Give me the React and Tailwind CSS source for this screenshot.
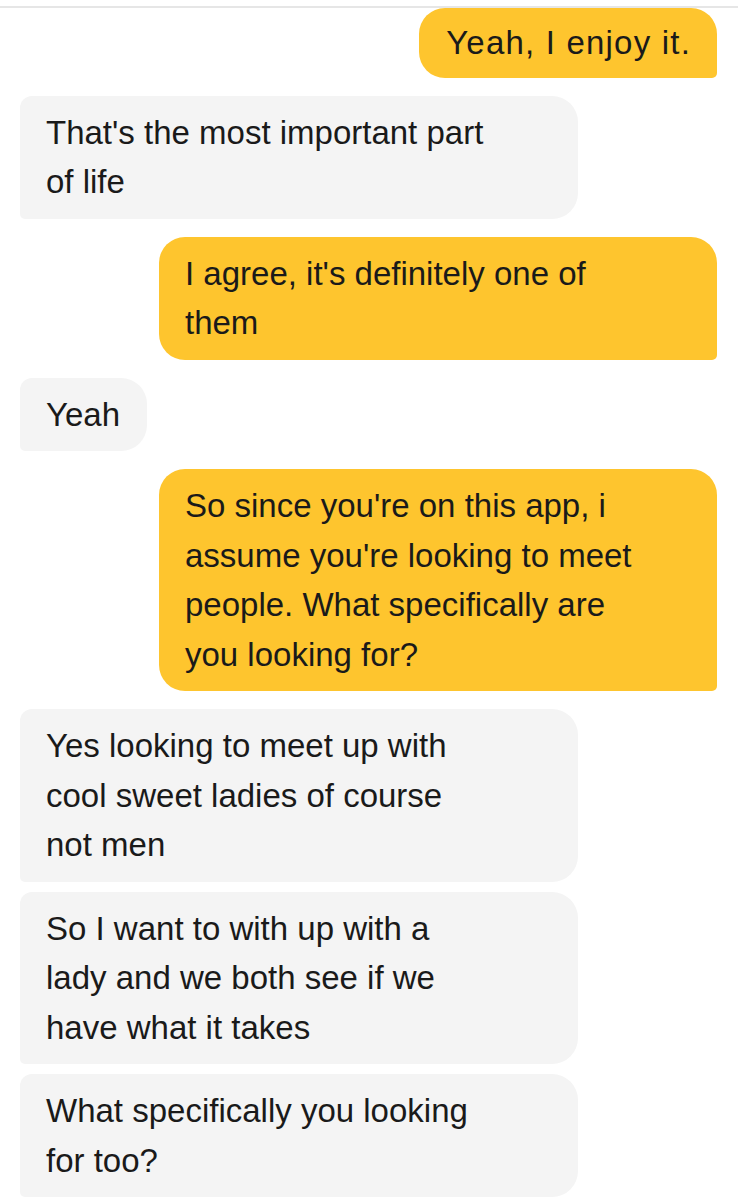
const messages = [
  { me: true, lines: ["Yeah, I enjoy it."], first: true },
  { me: false, lines: ["That's the most important part", "of life"] },
  { me: true, lines: ["I agree, it's definitely one of", "them"] },
  { me: false, lines: ["Yeah"] },
  {
    me: true,
    lines: [
      "So since you're on this app, i",
      "assume you're looking to meet",
      "people. What specifically are",
      "you looking for?",
    ],
  },
  { me: false, lines: ["Yes looking to meet up with", "cool sweet ladies of course", "not men"] },
  { me: false, lines: ["So I want to with up with a", "lady and we both see if we", "have what it takes"], tight: true },
  { me: false, lines: ["What specifically you looking", "for too?"], tight: true },
];

function Bubble({ me, lines, first }) {
  const wide = lines.length > 1;
  return (
    <div
      className={
        (me
          ? "bg-[#fec52e] rounded-l-[26px] rounded-tr-[26px] rounded-br-[5px] self-end mr-[21px]"
          : "bg-[#f4f4f4] rounded-tl-[12px] rounded-bl-[5px] rounded-r-[26px] self-start ml-[20px]") +
        (wide ? " w-[558px]" : "") +
        (first ? " py-[10px] pl-[27px] pr-[26px] tracking-[1.2px]" : " py-3 pl-[26px] pr-[27px]") +
        " text-[33px] leading-[49.5px] text-[#1a1a1a] whitespace-nowrap"
      }
    >
      {lines.map((l, i) => (
        <div key={i}>{l}</div>
      ))}
    </div>
  );
}

export default function App() {
  return (
    <div
      className="w-[738px] h-[1200px] bg-white overflow-hidden"
      style={{ fontFamily: "'Liberation Sans', Arial, sans-serif" }}
    >
      <div className="h-[8px] border-b-2 border-[#e6e6e6]" />
      <div className="flex flex-col">
        {messages.map((m, i) => (
          <div key={i} className={"flex flex-col " + (i === 0 ? "" : m.tight ? "mt-[10px]" : "mt-[18px]")}>
            <Bubble {...m} />
          </div>
        ))}
      </div>
    </div>
  );
}
